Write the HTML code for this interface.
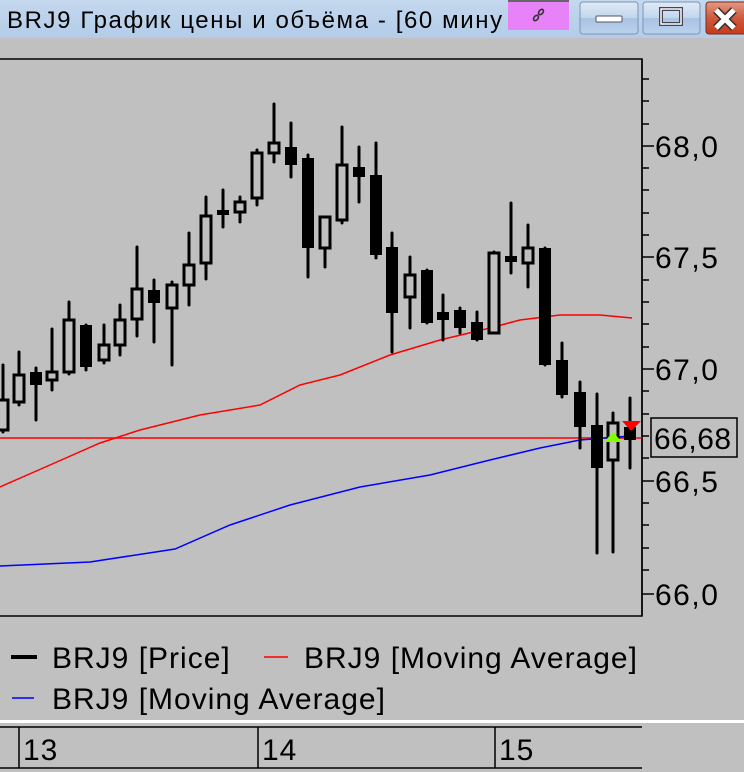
<!DOCTYPE html>
<html><head><meta charset="utf-8"><style>
html,body{margin:0;padding:0;width:744px;height:772px;overflow:hidden;background:#c0c0c0}
svg{display:block}
text{font-family:"Liberation Sans",sans-serif}
</style></head><body>
<svg width="744" height="772" viewBox="0 0 744 772" xmlns="http://www.w3.org/2000/svg">
<defs><linearGradient id="tb" x1="0" y1="0" x2="0" y2="1"><stop offset="0" stop-color="#c4d8ee"/><stop offset="1" stop-color="#b3cce8"/></linearGradient>
<linearGradient id="bt" x1="0" y1="0" x2="0" y2="1"><stop offset="0" stop-color="#dfeaf6"/><stop offset="0.5" stop-color="#c3d6ec"/><stop offset="0.5" stop-color="#a9c3e2"/><stop offset="1" stop-color="#bcd2ec"/></linearGradient>
<linearGradient id="cl" x1="0" y1="0" x2="0" y2="1"><stop offset="0" stop-color="#e39a86"/><stop offset="0.5" stop-color="#d0583c"/><stop offset="1" stop-color="#c33c1c"/></linearGradient></defs>
<rect x="0" y="0" width="744" height="38" fill="url(#tb)"/>
<text x="7" y="28" font-size="24" letter-spacing="1.6" fill="#000">BRJ9 График цены и объёма - [60 мину</text>
<rect x="508" y="0" width="61" height="30" fill="#e882f8"/>
<rect x="508" y="0" width="61" height="2" fill="#666"/>
<g stroke="#333" stroke-width="1.6" fill="none"><ellipse cx="541" cy="12" rx="2" ry="3" transform="rotate(40 541 12)"/><ellipse cx="536" cy="18" rx="2" ry="3" transform="rotate(40 536 18)"/></g>
<rect x="580" y="2" width="58" height="32" rx="3" fill="url(#bt)" stroke="#7d93b5"/>
<rect x="596" y="16" width="26" height="6" rx="1" fill="#fff" stroke="#556"/>
<rect x="643" y="2" width="57" height="32" rx="3" fill="url(#bt)" stroke="#7d93b5"/>
<rect x="661" y="9" width="20" height="15" fill="none" stroke="#445" stroke-width="4"/>
<rect x="661" y="9" width="20" height="15" fill="none" stroke="#fff" stroke-width="1.5"/>
<rect x="706" y="2" width="42" height="32" rx="3" fill="url(#cl)" stroke="#7a2a18"/>
<path d="M716 10 L734 28 M734 10 L716 28" stroke="#333" stroke-width="8"/>
<path d="M716 10 L734 28 M734 10 L716 28" stroke="#fff" stroke-width="5"/>

<rect x="-2" y="59" width="644" height="557" fill="#c0c0c0" stroke="#000" stroke-width="1.5"/>
<g stroke="#000" stroke-width="1.5">
<line x1="642" y1="59" x2="642" y2="616"/>
<line x1="642" y1="79" x2="649" y2="79"/><line x1="642" y1="101" x2="649" y2="101"/><line x1="642" y1="124" x2="649" y2="124"/><line x1="642" y1="146" x2="654" y2="146"/><line x1="642" y1="168" x2="649" y2="168"/><line x1="642" y1="190" x2="649" y2="190"/><line x1="642" y1="213" x2="649" y2="213"/><line x1="642" y1="235" x2="649" y2="235"/><line x1="642" y1="257" x2="654" y2="257"/><line x1="642" y1="280" x2="649" y2="280"/><line x1="642" y1="302" x2="649" y2="302"/><line x1="642" y1="324" x2="649" y2="324"/><line x1="642" y1="347" x2="649" y2="347"/><line x1="642" y1="369" x2="654" y2="369"/><line x1="642" y1="391" x2="649" y2="391"/><line x1="642" y1="414" x2="649" y2="414"/><line x1="642" y1="436" x2="649" y2="436"/><line x1="642" y1="458" x2="649" y2="458"/><line x1="642" y1="481" x2="654" y2="481"/><line x1="642" y1="503" x2="649" y2="503"/><line x1="642" y1="525" x2="649" y2="525"/><line x1="642" y1="548" x2="649" y2="548"/><line x1="642" y1="570" x2="649" y2="570"/><line x1="642" y1="594" x2="654" y2="594"/>
</g>
<g font-size="30" fill="#000" letter-spacing="1.5">
<text x="655" y="157">68,0</text><text x="655" y="268">67,5</text><text x="655" y="380">67,0</text><text x="655" y="492">66,5</text><text x="655" y="605">66,0</text>
</g>
<rect x="651" y="418" width="86" height="39" fill="none" stroke="#000" stroke-width="1.5"/>
<text x="654" y="449" font-size="30" letter-spacing="0.5">66,68</text>

<polyline fill="none" stroke="#ff0000" stroke-width="1.5" points="0,487 50,465 100,443 140,430 200,415 260,405 300,385 340,375 390,355 440,340 490,328 520,320 560,315 600,315 632,318"/>
<line x1="0" y1="438" x2="642" y2="438" stroke="#ff0000" stroke-width="1.5"/>
<polyline fill="none" stroke="#0000ff" stroke-width="1.5" points="0,566 90,562 175,549 230,525 290,505 360,487 430,475 490,460 540,448 580,440 630,436"/>

<g stroke="#000" stroke-width="3" stroke-linecap="round">
<line x1="3" y1="365" x2="3" y2="432"/><line x1="19" y1="352" x2="19" y2="405"/><line x1="36" y1="368" x2="36" y2="420"/><line x1="52" y1="329" x2="52" y2="390"/><line x1="69" y1="302" x2="69" y2="374"/><line x1="86" y1="325" x2="86" y2="370"/><line x1="104" y1="325" x2="104" y2="363"/><line x1="120" y1="305" x2="120" y2="355"/><line x1="137" y1="247" x2="137" y2="336"/><line x1="154" y1="280" x2="154" y2="342"/><line x1="172" y1="282" x2="172" y2="365"/><line x1="189" y1="233" x2="189" y2="305"/><line x1="206" y1="197" x2="206" y2="279"/><line x1="223" y1="190" x2="223" y2="227"/><line x1="240" y1="197" x2="240" y2="222"/><line x1="257" y1="150" x2="257" y2="205"/><line x1="274" y1="104" x2="274" y2="162"/><line x1="291" y1="123" x2="291" y2="177"/><line x1="308" y1="155" x2="308" y2="277"/><line x1="325" y1="217" x2="325" y2="267"/><line x1="342" y1="127" x2="342" y2="223"/><line x1="359" y1="147" x2="359" y2="202"/><line x1="376" y1="143" x2="376" y2="258"/><line x1="392" y1="233" x2="392" y2="352"/><line x1="410" y1="257" x2="410" y2="328"/><line x1="427" y1="270" x2="427" y2="323"/><line x1="443" y1="295" x2="443" y2="340"/><line x1="460" y1="308" x2="460" y2="333"/><line x1="477" y1="312" x2="477" y2="340"/><line x1="494" y1="252" x2="494" y2="333"/><line x1="511" y1="203" x2="511" y2="273"/><line x1="528" y1="225" x2="528" y2="287"/><line x1="545" y1="248" x2="545" y2="365"/><line x1="562" y1="343" x2="562" y2="397"/><line x1="580" y1="382" x2="580" y2="448"/><line x1="597" y1="394" x2="597" y2="553"/><line x1="613" y1="413" x2="613" y2="552"/><line x1="630" y1="398" x2="630" y2="468"/>
</g>
<g fill="#c0c0c0" stroke="#000" stroke-width="3">
<rect x="-2" y="400" width="10" height="30"/><rect x="14" y="375" width="10" height="27"/><rect x="47" y="372" width="10" height="8"/><rect x="64" y="320" width="10" height="52"/><rect x="99" y="345" width="10" height="15"/><rect x="115" y="320" width="10" height="25"/><rect x="132" y="289" width="10" height="30"/><rect x="167" y="285" width="10" height="23"/><rect x="184" y="265" width="10" height="20"/><rect x="201" y="216" width="10" height="47"/><rect x="235" y="202" width="10" height="10"/><rect x="252" y="153" width="10" height="45"/><rect x="269" y="143" width="10" height="10"/><rect x="320" y="217" width="10" height="31"/><rect x="337" y="165" width="10" height="55"/><rect x="405" y="275" width="10" height="22"/><rect x="489" y="253" width="10" height="80"/><rect x="523" y="248" width="10" height="15"/><rect x="608" y="423" width="10" height="37"/>
</g>
<g fill="#000">
<rect x="30" y="372" width="12" height="13"/><rect x="80" y="325" width="12" height="42"/><rect x="148" y="290" width="12" height="13"/><rect x="217" y="210" width="12" height="5"/><rect x="285" y="147" width="12" height="18"/><rect x="302" y="158" width="12" height="90"/><rect x="353" y="167" width="12" height="10"/><rect x="370" y="175" width="12" height="80"/><rect x="386" y="247" width="12" height="66"/><rect x="421" y="270" width="12" height="53"/><rect x="437" y="312" width="12" height="8"/><rect x="454" y="310" width="12" height="18"/><rect x="471" y="322" width="12" height="18"/><rect x="505" y="256" width="12" height="6"/><rect x="539" y="248" width="12" height="117"/><rect x="556" y="360" width="12" height="35"/><rect x="574" y="392" width="12" height="35"/><rect x="591" y="425" width="12" height="43"/><rect x="624" y="427" width="12" height="13"/>
</g>
<polygon points="604,442 622,442 613,432" fill="#80ff00"/>
<polygon points="622,421 641,421 631,431" fill="#ff0000"/>

<line x1="11" y1="657" x2="37" y2="657" stroke="#000" stroke-width="4"/>
<line x1="264" y1="657" x2="288" y2="657" stroke="#ff0000" stroke-width="1.5"/>
<line x1="12" y1="698" x2="34" y2="698" stroke="#0000ff" stroke-width="1.5"/>
<g font-size="30" fill="#000" letter-spacing="1">
<text x="52" y="668">BRJ9 [Price]</text>
<text x="304" y="668">BRJ9 [Moving Average]</text>
<text x="52" y="709">BRJ9 [Moving Average]</text>
</g>
<rect x="0" y="720" width="744" height="3" fill="#fff"/>
<g stroke="#000" stroke-width="1.5">
<line x1="0" y1="727" x2="642" y2="727"/><line x1="0" y1="768" x2="642" y2="768"/>
<line x1="19" y1="727" x2="19" y2="768"/><line x1="258" y1="727" x2="258" y2="768"/><line x1="495" y1="727" x2="495" y2="768"/>
</g>
<g font-size="30" fill="#000" letter-spacing="1"><text x="23" y="760">13</text><text x="262" y="760">14</text><text x="499" y="760">15</text></g>
</svg>
</body></html>
